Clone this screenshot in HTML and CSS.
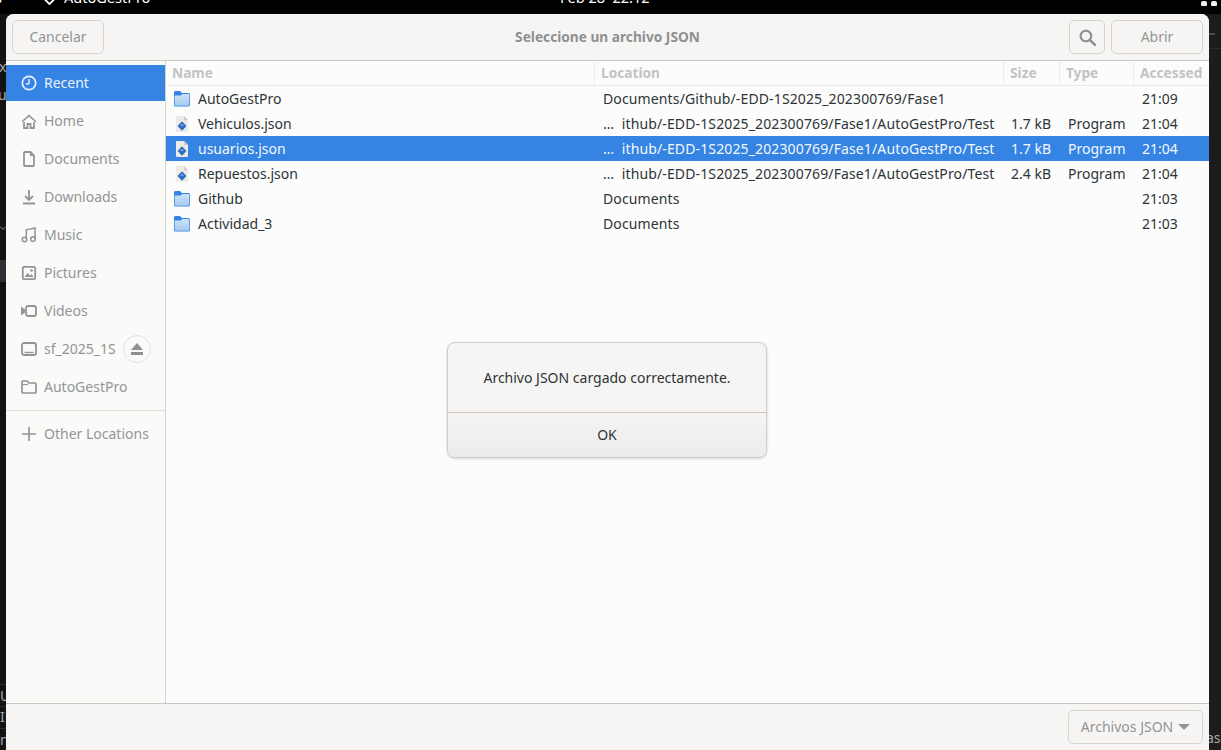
FILE: index.html
```html
<!DOCTYPE html>
<html lang="es">
<head>
<meta charset="utf-8">
<title>Seleccione un archivo JSON</title>
<link rel="stylesheet" href="styles.css">
</head>
<body>
<svg class="defs" width="0" height="0" aria-hidden="true">
  <defs>
    <linearGradient id="fg" x1="0" y1="0" x2="0" y2="1"><stop offset="0" stop-color="#cfe3f5"/><stop offset="1" stop-color="#a4caee"/></linearGradient>
    <symbol id="folder" viewBox="0 0 16 16">
      <path d="M0 1.500C0 .7.7 0 1.500 0H6l2 2h6.500c.8 0 1.500.7 1.500 1.500V14c0 .8-.7 1.500-1.500 1.500h-13C.7 15.500 0 14.800 0 14z" fill="#3584e4"/>
      <path d="M.7 4.500h5.800L8.500 3H15.300v11c0 .5-.4.8-.8.8h-13c-.4 0-.8-.3-.8-.8z" fill="url(#fg)"/>
    </symbol>
    <symbol id="json" viewBox="0 0 14 16">
      <path d="M2 0h7l4 4v11a1 1 0 0 1-1 1H2a1 1 0 0 1-1-1V1a1 1 0 0 1 1-1z" fill="#edebe8"/>
      <path d="M9 0l4 4H9z" fill="#cfccc8"/>
      <path d="M7 6.300l3.500 3.700L7 13.700 3.500 10z" fill="#2f6fbd" stroke="#2f6fbd" stroke-width="1.400" stroke-linejoin="round"/>
      <path d="M7 7.500L9 10H5z" fill="#6fa4e0"/>
    </symbol>
  </defs>
</svg>
<div class="desktop">
  <header class="panel">
    <span class="panel-edge">s</span>
    <span class="panel-app">
      <svg class="panel-icon" viewBox="0 0 16 16"><path d="M8 1l7 7-7 7-7-7z" fill="none" stroke="#fff" stroke-width="2"/></svg>
      AutoGestPro
    </span>
    <span class="panel-clock">Feb 28&nbsp; 22:12</span>
    <span class="tray"><i class="tray-dot"></i><i class="tray-dot"></i></span>
  </header>
  <div class="stage">
    <div class="strip strip-left" aria-hidden="true">
      <span class="frag frag-x">x</span>
      <span class="frag frag-u">u</span>
      <svg class="frag frag-chev" viewBox="0 0 6 4" width="6" height="4"><path d="M0 .5l3 3 3-3" fill="none" stroke="#8a8a8a" stroke-width="1"/></svg>
      <span class="frag frag-block"></span>
      <span class="frag frag-rows"></span>
      <span class="frag frag-u2">U</span>
      <span class="frag frag-in">IN</span>
      <span class="frag frag-n">n</span>
    </div>
    <main class="window">
      <div class="titlebar">
        <div class="bar-start"><button class="btn btn-cancel">Cancelar</button></div>
        <div class="title">Seleccione un archivo JSON</div>
        <div class="bar-end">
          <button class="btn btn-search" aria-label="Buscar">
            <svg viewBox="0 0 16 16" width="17" height="17"><circle cx="6.500" cy="6.500" r="5" fill="none" stroke="#8d8f8f" stroke-width="2"/><path d="M10.200 10.200L15 15" stroke="#8d8f8f" stroke-width="2.200" stroke-linecap="round"/></svg>
          </button>
          <button class="btn btn-open">Abrir</button>
        </div>
      </div>
      <div class="content">
        <nav class="sidebar">
          <div class="place active">
            <svg class="pi" viewBox="0 0 16 16"><circle cx="8" cy="8" r="6.700" fill="none" stroke="currentColor" stroke-width="1.700"/><path d="M8 4v4.500l-3 .8" fill="none" stroke="currentColor" stroke-width="1.400"/></svg>
            <span>Recent</span>
          </div>
          <div class="place">
            <svg class="pi" viewBox="0 0 16 16"><path d="M8 1.500L.5 8.300 1.500 9.300 8 3.700l6.500 5.600 1-1z" fill="currentColor"/><path d="M3 9v6h3.500v-4h3v4H13V9" fill="none" stroke="currentColor" stroke-width="1.800"/></svg>
            <span>Home</span>
          </div>
          <div class="place">
            <svg class="pi" viewBox="0 0 16 16"><path d="M4 1h5.500L13 4.500V14a1 1 0 0 1-1 1H4a1 1 0 0 1-1-1V2a1 1 0 0 1 1-1z" fill="none" stroke="currentColor" stroke-width="1.800"/><path d="M9 1v4h4" fill="currentColor"/></svg>
            <span>Documents</span>
          </div>
          <div class="place">
            <svg class="pi" viewBox="0 0 16 16"><path d="M8 1v9M4 7l4 4 4-4" fill="none" stroke="currentColor" stroke-width="1.800"/><path d="M2 14.500h12" stroke="currentColor" stroke-width="2"/></svg>
            <span>Downloads</span>
          </div>
          <div class="place">
            <svg class="pi" viewBox="0 0 16 16"><circle cx="3.500" cy="12.500" r="2.300" fill="none" stroke="currentColor" stroke-width="1.500"/><circle cx="12" cy="12" r="2.300" fill="none" stroke="currentColor" stroke-width="1.500"/><path d="M5.300 12.500V2.800L14 1v11" fill="none" stroke="currentColor" stroke-width="1.500"/></svg>
            <span>Music</span>
          </div>
          <div class="place">
            <svg class="pi" viewBox="0 0 16 16"><rect x="1.800" y="1.800" width="12.400" height="12.400" rx="1.500" fill="none" stroke="currentColor" stroke-width="1.800"/><path d="M3.500 12l3-4 2.500 2.500 1.500-1.500 2 3z" fill="currentColor"/><circle cx="10.500" cy="5.500" r="1.300" fill="currentColor"/></svg>
            <span>Pictures</span>
          </div>
          <div class="place">
            <svg class="pi" viewBox="0 0 16 16"><rect x="5" y="3" width="10" height="10" rx="2" fill="none" stroke="currentColor" stroke-width="1.800"/><path d="M0 3.500l4 3v3l-4 3z" fill="currentColor"/></svg>
            <span>Videos</span>
          </div>
          <div class="place place-drive">
            <svg class="pi" viewBox="0 0 16 16"><rect x="1" y="2" width="14" height="12" rx="2" fill="none" stroke="currentColor" stroke-width="1.800"/><path d="M3.500 11.500h9" stroke="currentColor" stroke-width="1.400"/></svg>
            <span>sf_2025_1S</span>
            <span class="eject">
              <svg viewBox="0 0 14 14" width="14" height="14"><path d="M7 1l6 7H1z" fill="#8f9191"/><rect x="1" y="10" width="12" height="3" fill="#8f9191"/></svg>
            </span>
          </div>
          <div class="place">
            <svg class="pi" viewBox="0 0 16 16"><path d="M1 3a1 1 0 0 1 1-1h4l2 2h6a1 1 0 0 1 1 1v8a1 1 0 0 1-1 1H2a1 1 0 0 1-1-1z" fill="none" stroke="currentColor" stroke-width="1.700"/><path d="M1 5.500h6" stroke="currentColor" stroke-width="1.200"/></svg>
            <span>AutoGestPro</span>
          </div>
          <div class="separator"></div>
          <div class="place">
            <svg class="pi" viewBox="0 0 16 16"><path d="M8 1v14M1 8h14" stroke="currentColor" stroke-width="1.600"/></svg>
            <span>Other Locations</span>
          </div>
        </nav>
        <section class="files">
          <div class="row head">
            <div class="hc hc-name">Name</div>
            <div class="hc">Location</div>
            <div class="hc">Size</div>
            <div class="hc">Type</div>
            <div class="hc hc-last">Accessed</div>
          </div>
          <div class="row">
            <div class="c-name"><svg class="fi"><use href="#folder"/></svg>AutoGestPro</div>
            <div class="c-loc">Documents/Github/-EDD-1S2025_202300769/Fase1</div>
            <div class="c-size"></div><div class="c-type"></div><div class="c-time">21:09</div>
          </div>
          <div class="row">
            <div class="c-name"><svg class="fi"><use href="#json"/></svg>Vehiculos.json</div>
            <div class="c-loc">…&nbsp; ithub/-EDD-1S2025_202300769/Fase1/AutoGestPro/Test</div>
            <div class="c-size">1.7 kB</div><div class="c-type">Program</div><div class="c-time">21:04</div>
          </div>
          <div class="row selected">
            <div class="c-name"><svg class="fi"><use href="#json"/></svg>usuarios.json</div>
            <div class="c-loc">…&nbsp; ithub/-EDD-1S2025_202300769/Fase1/AutoGestPro/Test</div>
            <div class="c-size">1.7 kB</div><div class="c-type">Program</div><div class="c-time">21:04</div>
          </div>
          <div class="row">
            <div class="c-name"><svg class="fi"><use href="#json"/></svg>Repuestos.json</div>
            <div class="c-loc">…&nbsp; ithub/-EDD-1S2025_202300769/Fase1/AutoGestPro/Test</div>
            <div class="c-size">2.4 kB</div><div class="c-type">Program</div><div class="c-time">21:04</div>
          </div>
          <div class="row">
            <div class="c-name"><svg class="fi"><use href="#folder"/></svg>Github</div>
            <div class="c-loc">Documents</div>
            <div class="c-size"></div><div class="c-type"></div><div class="c-time">21:03</div>
          </div>
          <div class="row">
            <div class="c-name"><svg class="fi"><use href="#folder"/></svg>Actividad_3</div>
            <div class="c-loc">Documents</div>
            <div class="c-size"></div><div class="c-type"></div><div class="c-time">21:03</div>
          </div>
        </section>
      </div>
      <footer class="footer">
        <button class="btn btn-filter">Archivos JSON<i class="caret"></i></button>
      </footer>
      <div class="dialog" role="alertdialog">
        <div class="dialog-msg">Archivo JSON cargado correctamente.</div>
        <button class="dialog-ok">OK</button>
      </div>
    </main>
    <div class="strip strip-right" aria-hidden="true">
      <span class="frag frag-rule"></span>
      <span class="frag frag-line"></span>
      <span class="frag frag-asi">asi</span>
    </div>
  </div>
</div>
</body>
</html>
```
FILE: styles.css
```css
* { box-sizing: border-box; }
html, body { margin: 0; padding: 0; }
body {
  width: 1221px;
  height: 750px;
  overflow: hidden;
  background: #131313;
  font-family: "Noto Sans", "Open Sans", sans-serif;
  font-size: 14px;
  color: #2e3436;
}
.defs { position: absolute; }
.desktop { display: flex; flex-direction: column; height: 750px; }

.panel {
  flex: 0 0 14px;
  height: 14px;
  background: #000;
  color: #fff;
  overflow: hidden;
  display: flex;
  align-items: flex-end;
  padding-bottom: 7px;
  font-size: 14.500px;
  line-height: 20px;
}
.panel-edge { margin-left: -5px; width: 47px; }
.panel-app { display: flex; align-items: center; gap: 7px; width: 518px; }
.panel-icon { width: 15px; height: 15px; }
.panel-clock { flex: 1; }
.tray { display: flex; gap: 4px; margin-right: 4px; margin-bottom: 1px; }
.tray-dot { width: 6px; height: 5px; background: #eee; border-radius: 2px 2px 1px 1px; }

.stage { flex: 1; display: flex; min-height: 0; }
.strip {
  position: relative;
  overflow: hidden;
  color: #a8a8a8;
  font-size: 14px;
  line-height: 16px;
}
.strip-left { width: 6px; }
.strip-right { width: 12px; background: #1c1c1c; }
.frag { position: absolute; }
.frag-x { left: -1px; top: 45px; }
.frag-u { left: -2px; top: 73px; }
.frag-chev { left: 0; top: 212px; }
.frag-block { left: 0; top: 246px; width: 6px; height: 22px; background: #2e2e33; }
.frag-rows {
  left: 0;
  top: 670px;
  width: 6px;
  height: 66px;
  background: repeating-linear-gradient(#2c2c2c 0 1px, transparent 1px 22px);
}
.frag-u2 { left: 0; top: 674px; }
.frag-in { left: 0; top: 695px; }
.frag-n { left: 0; top: 718px; }
.frag-rule { left: 0; top: 19px; width: 6px; height: 2px; background: #4a4a4a; }
.frag-line { left: 0; top: 34px; width: 12px; height: 1px; background: #2c2c2c; }
.frag-asi { left: -3px; top: 716px; }

.window {
  position: relative;
  width: 1203px;
  display: flex;
  flex-direction: column;
  background: #fcfcfc;
  border-radius: 8px 8px 0 0;
  overflow: hidden;
}

.btn {
  font: inherit;
  height: 34px;
  padding: 0 0 2px;
  color: #929595;
  background: #f6f5f4;
  border: 1px solid #d8d5d1;
  border-radius: 5px;
  display: flex;
  align-items: center;
  justify-content: center;
}
.titlebar {
  flex: 0 0 47px;
  display: grid;
  grid-template-columns: 1fr auto 1fr;
  align-items: center;
  padding: 0 6px;
  background: #f6f5f4;
  border-bottom: 1px solid #cdc7c2;
}
.bar-start { display: flex; }
.bar-end { display: flex; justify-content: flex-end; gap: 6px; }
.btn-cancel { width: 92px; }
.title { font-size: 13.700px; font-weight: 700; color: #8e9090; padding-bottom: 2px; }
.btn-search { width: 36px; padding: 0; }
.btn-open { width: 92px; }

.content { flex: 1; display: flex; min-height: 0; }
.sidebar {
  width: 160px;
  background: #fafaf9;
  border-right: 1px solid #d4d2ce;
  padding-top: 4px;
  color: #929595;
}
.place {
  height: 36px;
  margin-bottom: 2px;
  display: flex;
  align-items: center;
  padding-left: 15px;
  line-height: 18px;
}
.place.active { background: #3584e4; color: #e9f1fb; }
.pi { width: 16px; height: 16px; margin-right: 7px; flex: none; }
.place-drive { position: relative; }
.place .eject {
  position: absolute;
  left: 117px;
  top: 4px;
  width: 28px;
  height: 28px;
  padding: 0;
  border: 1px solid #e2e1de;
  border-radius: 50%;
  display: flex;
  align-items: center;
  justify-content: center;
}
.separator { height: 1px; background: #e0dfdc; margin: 5px 0 5px; }

.files { flex: 1; min-width: 0; background: #fcfcfc; }
.row {
  display: grid;
  grid-template-columns: 429px 409px 56px 74px 1fr;
  height: 25px;
  align-items: center;
  white-space: nowrap;
}
.row.selected { background: #3584e4; color: #f3f8fd; }
.row.head {
  height: 25px;
  align-items: stretch;
  border-bottom: 1px solid #ecebe9;
  font-size: 13.700px;
  font-weight: 700;
  color: #c2c3c3;
}
.hc { border-right: 1px solid #eeedeb; padding: 0 0 2px 6px; display: flex; align-items: center; overflow: hidden; }
.hc-last { border-right: 0; }
.c-name { display: flex; align-items: center; padding-left: 8px; }
.fi { width: 16px; height: 16px; margin-right: 8px; flex: none; }
.c-loc { padding-left: 8px; letter-spacing: .13px; }
.c-size { padding-left: 7px; }
.c-type { padding-left: 8px; }
.c-time { padding-left: 8px; }

.footer {
  flex: 0 0 47px;
  display: flex;
  align-items: center;
  justify-content: flex-end;
  padding: 0 6px;
  background: #f6f5f4;
  border-top: 1px solid #cdc7c2;
}
.btn-filter { width: 135px; gap: 5px; }
.caret { width: 0; height: 0; margin-top: 2px; border-left: 6px solid transparent; border-right: 6px solid transparent; border-top: 6px solid #929595; }

.dialog {
  position: absolute;
  left: 441px;
  top: 328px;
  width: 320px;
  height: 116px;
  display: flex;
  flex-direction: column;
  background: #f6f5f4;
  border: 1px solid #cfccc8;
  border-radius: 8px;
  box-shadow: 0 1px 3px rgba(0, 0, 0, .16);
  overflow: hidden;
}
.dialog-msg {
  flex: 0 0 70px;
  display: flex;
  align-items: center;
  justify-content: center;
  padding-bottom: 1px;
  border-bottom: 1px solid #cdc7c2;
}
.dialog-ok {
  flex: 1;
  font: inherit;
  color: #2e3436;
  border: 0;
  background: linear-gradient(#f6f5f4, #edebe9);
  padding: 0 0 1px;
}
```
